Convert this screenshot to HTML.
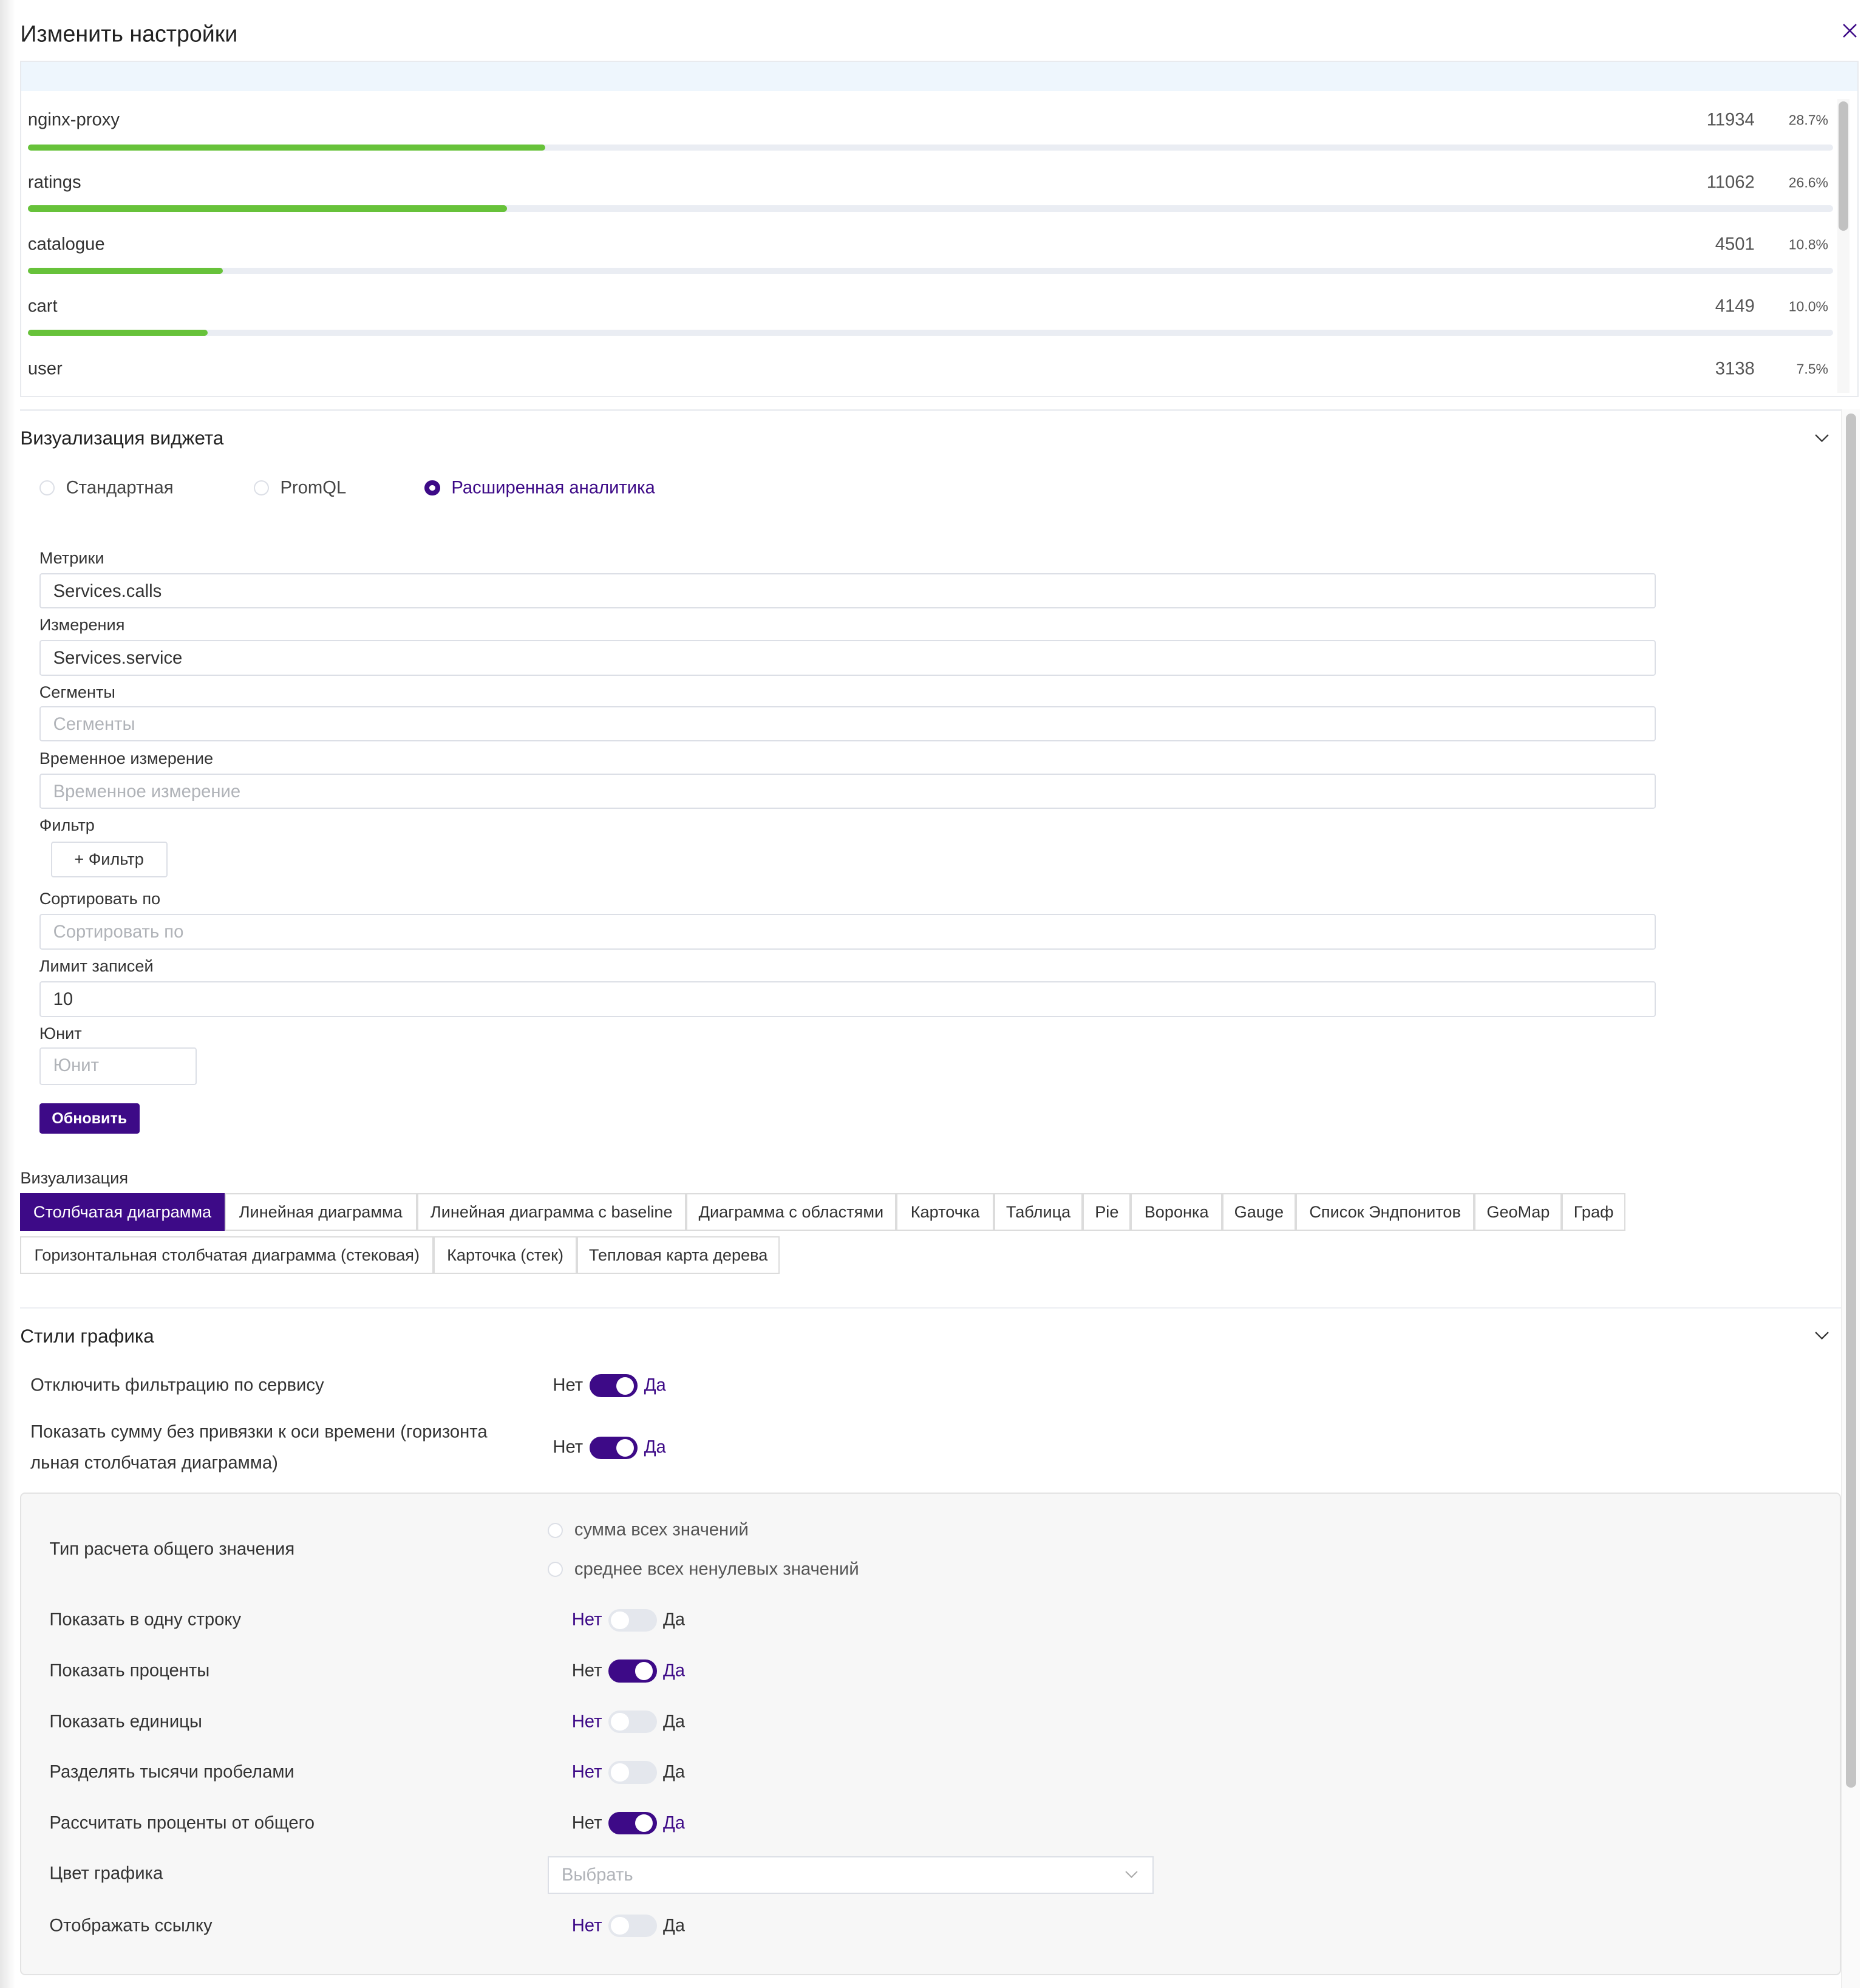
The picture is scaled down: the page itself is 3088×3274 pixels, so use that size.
<!DOCTYPE html>
<html><head><meta charset="utf-8"><style>
html,body{margin:0;padding:0;}
body{width:3088px;height:3274px;overflow:hidden;background:#fff;}
#p{zoom:2.088;position:relative;width:1479px;height:1568px;font-family:"Liberation Sans","DejaVu Sans",sans-serif;color:#333;font-size:14px;}
.a{position:absolute;white-space:nowrap;}
.sh{position:absolute;left:0;top:0;width:12px;height:1568px;background:linear-gradient(to right,#e6e6e6,#fff);}
.t{transform:translateY(-50%);}
.inp{position:absolute;left:31px;width:1275px;height:28px;border:1px solid #dcdfe6;border-radius:2px;box-sizing:border-box;padding-left:10px;line-height:27px;font-size:14px;color:#333;}
.ph{color:#b0b3b8;}
.lbl{position:absolute;left:31px;font-size:13px;color:#333;transform:translateY(-50%);}
.bar{position:absolute;left:22px;width:1424px;height:5px;border-radius:3px;background:#eaedf3;}
.bar i{position:absolute;left:0;top:0;height:5px;border-radius:3px;background:#67c23a;}
.tab{position:absolute;height:30px;box-sizing:border-box;border:1px solid #dcdcdc;line-height:28px;text-align:center;font-size:13px;color:#333;}
.tg{position:absolute;width:38px;height:18px;border-radius:9px;}
.tg.on{background:#3d0a87;}
.tg.off{background:#e4e7ed;}
.tg b{position:absolute;top:2px;width:14px;height:14px;border-radius:7px;background:#fff;}
.tg.on b{right:3px;}.tg.off b{left:2px;}
.pu{color:#3d0a87;}
.rad{position:absolute;width:12px;height:12px;border:1px solid #dcdfe6;border-radius:50%;box-sizing:border-box;background:#fff;}
</style></head><body><div id="p">
<div class="sh"></div>
<div class="a t" style="left:16px;top:27px;font-size:18px;color:#222">Изменить настройки</div>
<svg class="a" style="left:1453px;top:18px" width="12" height="12" viewBox="0 0 12 12"><path d="M1 1L11 11M11 1L1 11" stroke="#3d0a87" stroke-width="1.2"/></svg>

<div class="a" style="left:16px;top:48px;width:1450px;height:265px;border:1px solid #e8eaee;box-sizing:border-box"></div>
<div class="a" style="left:17px;top:49px;width:1448px;height:23px;background:#eef6fd"></div>
<div class="a" style="left:1449px;top:78px;width:10px;height:232px;background:#f7f7f7"></div>
<div class="a" style="left:1450px;top:80px;width:8px;height:102px;border-radius:4px;background:#c1c1c1"></div>

<div class="a t" style="left:22px;top:95px">nginx-proxy</div><div class="a t" style="right:95px;top:95px;color:#555">11934</div><div class="a t" style="right:37px;top:95px;font-size:11px;color:#555">28.7%</div>
<div class="bar" style="top:114px"><i style="width:408px"></i></div>
<div class="a t" style="left:22px;top:144px">ratings</div><div class="a t" style="right:95px;top:144px;color:#555">11062</div><div class="a t" style="right:37px;top:144px;font-size:11px;color:#555">26.6%</div>
<div class="bar" style="top:162px"><i style="width:378px"></i></div>
<div class="a t" style="left:22px;top:193px">catalogue</div><div class="a t" style="right:95px;top:193px;color:#555">4501</div><div class="a t" style="right:37px;top:193px;font-size:11px;color:#555">10.8%</div>
<div class="bar" style="top:211px"><i style="width:154px"></i></div>
<div class="a t" style="left:22px;top:242px">cart</div><div class="a t" style="right:95px;top:242px;color:#555">4149</div><div class="a t" style="right:37px;top:242px;font-size:11px;color:#555">10.0%</div>
<div class="bar" style="top:260px"><i style="width:142px"></i></div>
<div class="a t" style="left:22px;top:291px">user</div><div class="a t" style="right:95px;top:291px;color:#555">3138</div><div class="a t" style="right:37px;top:291px;font-size:11px;color:#555">7.5%</div>

<div class="a" style="left:16px;top:323px;width:1436px;height:1px;background:#eceef2"></div>
<div class="a" style="left:1452px;top:323px;width:14px;height:1245px;background:#fafafa;border-left:1px solid #eee"></div>
<div class="a" style="left:1456px;top:326px;width:8px;height:1084px;border-radius:4px;background:#c4c4c4"></div>

<div class="a t" style="left:16px;top:346px;font-size:15px;color:#222">Визуализация виджета</div>
<svg class="a" style="left:1431px;top:342px" width="12" height="8" viewBox="0 0 12 8"><path d="M1 1L6 6L11 1" stroke="#333" fill="none" stroke-width="1.1"/></svg>

<div class="rad" style="left:31px;top:379px"></div><div class="a t" style="left:52px;top:385px;color:#444">Стандартная</div>
<div class="rad" style="left:200px;top:379px"></div><div class="a t" style="left:221px;top:385px;color:#444">PromQL</div>
<div class="rad" style="left:335px;top:379px;border:4px solid #3d0a87"></div><div class="a t pu" style="left:356px;top:385px">Расширенная аналитика</div>

<div class="lbl" style="top:440px">Метрики</div><div class="inp" style="top:452px">Services.calls</div>
<div class="lbl" style="top:493px">Измерения</div><div class="inp" style="top:505px">Services.service</div>
<div class="lbl" style="top:546px">Сегменты</div><div class="inp ph" style="top:557px">Сегменты</div>
<div class="lbl" style="top:598px">Временное измерение</div><div class="inp ph" style="top:610px">Временное измерение</div>
<div class="lbl" style="top:651px">Фильтр</div>
<div class="a" style="left:40px;top:664px;width:92px;height:28px;border:1px solid #dcdfe6;box-sizing:border-box;border-radius:2px;text-align:center;line-height:26px;font-size:13px">+ Фильтр</div>
<div class="lbl" style="top:709px">Сортировать по</div><div class="inp ph" style="top:721px">Сортировать по</div>
<div class="lbl" style="top:762px">Лимит записей</div><div class="inp" style="top:774px">10</div>
<div class="lbl" style="top:815px">Юнит</div><div class="inp ph" style="top:826px;width:124px;height:30px">Юнит</div>
<div class="a" style="left:31px;top:870px;width:79px;height:24px;background:#3d0a87;border-radius:2px;color:#fff;font-size:12px;font-weight:bold;text-align:center;line-height:24px">Обновить</div>

<div class="lbl" style="left:16px;top:929px">Визуализация</div>
<div class="tab" style="left:16px;top:941px;width:161px;background:#3d0a87;color:#fff;border-color:#3d0a87">Столбчатая диаграмма</div>
<div class="tab" style="left:177px;top:941px;width:152px">Линейная диаграмма</div>
<div class="tab" style="left:329px;top:941px;width:212px">Линейная диаграмма с baseline</div>
<div class="tab" style="left:541px;top:941px;width:166px">Диаграмма с областями</div>
<div class="tab" style="left:707px;top:941px;width:77px">Карточка</div>
<div class="tab" style="left:784px;top:941px;width:70px">Таблица</div>
<div class="tab" style="left:854px;top:941px;width:38px">Pie</div>
<div class="tab" style="left:892px;top:941px;width:72px">Воронка</div>
<div class="tab" style="left:964px;top:941px;width:58px">Gauge</div>
<div class="tab" style="left:1022px;top:941px;width:141px">Список Эндпонитов</div>
<div class="tab" style="left:1163px;top:941px;width:69px">GeoMap</div>
<div class="tab" style="left:1232px;top:941px;width:50px">Граф</div>
<div class="tab" style="left:16px;top:975px;width:326px">Горизонтальная столбчатая диаграмма (стековая)</div>
<div class="tab" style="left:342px;top:975px;width:113px">Карточка (стек)</div>
<div class="tab" style="left:455px;top:975px;width:160px">Тепловая карта дерева</div>

<div class="a" style="left:16px;top:1031px;width:1436px;height:1px;background:#eceef2"></div>
<div class="a t" style="left:16px;top:1054px;font-size:15px;color:#222">Стили графика</div>
<svg class="a" style="left:1431px;top:1050px" width="12" height="8" viewBox="0 0 12 8"><path d="M1 1L6 6L11 1" stroke="#333" fill="none" stroke-width="1.1"/></svg>

<div class="a t" style="left:24px;top:1093px">Отключить фильтрацию по сервису</div>
<div class="a t" style="left:436px;top:1093px">Нет</div><div class="tg on" style="left:465px;top:1084px"><b></b></div><div class="a t pu" style="left:508px;top:1093px">Да</div>
<div class="a t" style="left:24px;top:1130px">Показать сумму без привязки к оси времени (горизонта</div>
<div class="a t" style="left:24px;top:1154px">льная столбчатая диаграмма)</div>
<div class="a t" style="left:436px;top:1142px">Нет</div><div class="tg on" style="left:465px;top:1133px"><b></b></div><div class="a t pu" style="left:508px;top:1142px">Да</div>

<div class="a" style="left:16px;top:1177px;width:1436px;height:381px;background:#f7f7f7;border:1px solid #e3e3e3;border-radius:4px;box-sizing:border-box"></div>
<div class="a t" style="left:39px;top:1222px">Тип расчета общего значения</div>
<div class="rad" style="left:432px;top:1201px"></div><div class="a t" style="left:453px;top:1207px;color:#555">сумма всех значений</div>
<div class="rad" style="left:432px;top:1232px"></div><div class="a t" style="left:453px;top:1238px;color:#555">среднее всех ненулевых значений</div>

<div class="a t" style="left:39px;top:1278px">Показать в одну строку</div>
<div class="a t pu" style="left:451px;top:1278px">Нет</div><div class="tg off" style="left:480px;top:1269px"><b></b></div><div class="a t" style="left:523px;top:1278px">Да</div>
<div class="a t" style="left:39px;top:1318px">Показать проценты</div>
<div class="a t" style="left:451px;top:1318px">Нет</div><div class="tg on" style="left:480px;top:1309px"><b></b></div><div class="a t pu" style="left:523px;top:1318px">Да</div>
<div class="a t" style="left:39px;top:1358px">Показать единицы</div>
<div class="a t pu" style="left:451px;top:1358px">Нет</div><div class="tg off" style="left:480px;top:1349px"><b></b></div><div class="a t" style="left:523px;top:1358px">Да</div>
<div class="a t" style="left:39px;top:1398px">Разделять тысячи пробелами</div>
<div class="a t pu" style="left:451px;top:1398px">Нет</div><div class="tg off" style="left:480px;top:1389px"><b></b></div><div class="a t" style="left:523px;top:1398px">Да</div>
<div class="a t" style="left:39px;top:1438px">Рассчитать проценты от общего</div>
<div class="a t" style="left:451px;top:1438px">Нет</div><div class="tg on" style="left:480px;top:1429px"><b></b></div><div class="a t pu" style="left:523px;top:1438px">Да</div>
<div class="a t" style="left:39px;top:1478px">Цвет графика</div>
<div class="a" style="left:432px;top:1464px;width:478px;height:30px;background:#fff;border:1px solid #dcdfe6;box-sizing:border-box;padding-left:10px;line-height:28px;color:#b0b3b8">Выбрать</div>
<svg class="a" style="left:887px;top:1475px" width="11" height="7" viewBox="0 0 11 7"><path d="M1 1L5.5 5.5L10 1" stroke="#aaa" fill="none"/></svg>
<div class="a t" style="left:39px;top:1519px">Отображать ссылку</div>
<div class="a t pu" style="left:451px;top:1519px">Нет</div><div class="tg off" style="left:480px;top:1510px"><b></b></div><div class="a t" style="left:523px;top:1519px">Да</div>
</div></body></html>
